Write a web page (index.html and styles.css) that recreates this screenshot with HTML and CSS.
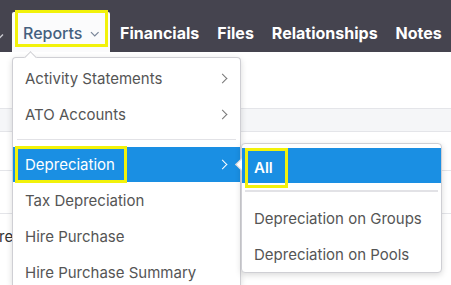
FILE: index.html
```html
<!DOCTYPE html>
<html lang="en">

<head>
  <meta charset="UTF-8">
  <meta name="viewport" content="width=device-width, initial-scale=1.0">
  <title>Reports menu</title>
  <link rel="stylesheet" href="styles.css">
</head>

<body>
  <nav class="topbar">
    <span class="nav-prev">
      <svg width="8" height="6" viewBox="0 0 8 6"><path d="M1 1.5l3 3 3-3" fill="none" stroke="#c9c9cf" stroke-width="1.4"/></svg>
    </span>
    <div class="nav-item active">
      Reports
      <svg class="caret-down" width="10" height="6" viewBox="0 0 10 6"><path d="M1 1l4 4 4-4" fill="none" stroke="#7a8699" stroke-width="1.3"/></svg>
      <span class="mark mark-tab"></span>
    </div>
    <div class="nav-item">Financials</div>
    <div class="nav-item">Files</div>
    <div class="nav-item">Relationships</div>
    <div class="nav-item">Notes</div>
  </nav>

  <main class="content">
    <div class="toolbar"></div>
    <div class="row head"></div>
    <div class="row first"></div>
    <div class="row"></div>
    <div class="row tall"><span class="cell">re</span></div>
  </main>

  <div class="menu main-menu">
    <div class="menu-list">
      <div class="menu-item">Activity Statements <span class="chev"></span></div>
      <div class="menu-item">ATO Accounts <span class="chev"></span></div>
      <div class="menu-sep"></div>
      <div class="menu-item selected"><span class="mark-text">Depreciation</span> <span class="chev"></span></div>
      <div class="menu-item">Tax Depreciation</div>
      <div class="menu-item">Hire Purchase</div>
      <div class="menu-item">Hire Purchase Summary</div>
    </div>
  </div>

  <div class="menu sub-menu">
    <div class="menu-item selected bold"><span class="mark-text">All</span></div>
    <div class="menu-sep"></div>
    <div class="menu-item">Depreciation on Groups</div>
    <div class="menu-item">Depreciation on Pools</div>
  </div>
</body>

</html>
```

FILE: styles.css
```css
body {
  margin: 0;
  font-family: Inter, 'Noto Sans', sans-serif;
  font-size: 15px;
  background-color: #fff;
  color: #333;
  height: 285px;
  overflow: hidden;
}

.topbar {
  display: flex;
  align-items: flex-end;
  height: 52px;
  background-color: #45444f;
  padding-top: 12px;
  box-sizing: border-box;
}

.nav-prev {
  width: 16px;
  margin-left: -4px;
  align-self: center;
  padding-top: 3px;
}

.nav-item {
  position: relative;
  height: 40px;
  padding: 2px 8px 0 10px;
  box-sizing: border-box;
  display: flex;
  align-items: center;
  color: #fff;
  font-size: 16px;
  font-weight: 700;
  white-space: nowrap;
}

.nav-item.active {
  background-color: #fbfbfc;
  color: #44607f;
  font-weight: 500;
  padding: 2px 10px 0 11px;
  width: 98px;
  border-radius: 2px 2px 0 0;
}

.caret-down {
  margin-left: 8px;
  margin-top: 2px;
}

.mark {
  position: absolute;
  border: 3px solid #f2f20a;
  pointer-events: none;
}

.mark-tab {
  left: 3px;
  top: -2px;
  width: 87px;
  height: 31px;
}

.content {
  display: flex;
  flex-direction: column;
}

.toolbar {
  height: 56px;
}

.row {
  height: 42px;
  border-top: 1px solid #e4e5e9;
  display: flex;
  align-items: center;
}

.row.head {
  height: 22px;
  background-color: #f5f6f8;
  border-bottom: 1px solid #e4e5e9;
}

.row.first {
  height: 38px;
  border-top: none;
}

.row.tall {
  height: 28px;
  padding-bottom: 15px;
}

.cell {
  margin-left: -1px;
  padding-top: 16px;
  color: #333;
}

.menu {
  position: absolute;
  background-color: #fff;
  border: 1px solid #cfcfd4;
  border-radius: 4px;
  box-shadow: 0 2px 6px rgba(0, 0, 0, 0.15);
  color: #555;
}

.main-menu {
  left: 12px;
  top: 57px;
  width: 229px;
  height: 228px;
  box-sizing: border-box;
  border-bottom: none;
  border-radius: 4px 4px 0 0;
}

.menu-list {
  height: 100%;
  padding-top: 2px;
  box-sizing: border-box;
  overflow: hidden;
}

.main-menu::before {
  content: "";
  position: absolute;
  left: 13px;
  top: -5px;
  width: 8px;
  height: 8px;
  background-color: #fff;
  border-left: 1px solid #cfcfd4;
  border-top: 1px solid #cfcfd4;
  transform: rotate(45deg);
}

.sub-menu {
  left: 241px;
  top: 143px;
  width: 199px;
  padding: 4px 0 0;
}

.sub-menu::before {
  content: "";
  position: absolute;
  left: -5px;
  top: 16px;
  width: 8px;
  height: 8px;
  background-color: #fff;
  border-left: 1px solid #cfcfd4;
  border-bottom: 1px solid #cfcfd4;
  transform: rotate(45deg);
}

.menu-item {
  position: relative;
  height: 36px;
  display: flex;
  align-items: center;
  padding: 0 12px;
  white-space: nowrap;
}

.menu-item.selected {
  background-color: #1a8fe3;
  color: #fff;
  height: 35px;
}

.menu-item.bold {
  font-weight: 600;
}

.mark-text {
  outline: 3px solid #f2f20a;
  outline-offset: 7px;
  padding: 0 2px 0 0;
}

.main-menu .mark-text {
  outline-offset: 6px;
  padding: 0 3px 0 1px;
  margin-left: -1px;
}

.sub-menu .mark-text {
  outline-offset: 6px;
  padding: 1px 6px 2px 0;
  margin-top: 4px;
}

.chev {
  margin-left: auto;
  width: 6px;
  height: 6px;
  border-right: 1.5px solid #777;
  border-top: 1.5px solid #777;
  transform: rotate(45deg);
  margin-right: 2px;
}

.selected .chev {
  border-color: #fff;
}

.menu-sep {
  height: 1px;
  background-color: #e2e2e6;
  margin: 7px 4px;
}

.sub-menu .menu-sep {
  margin: 7px 3px 8px;
  height: 2px;
}
```
